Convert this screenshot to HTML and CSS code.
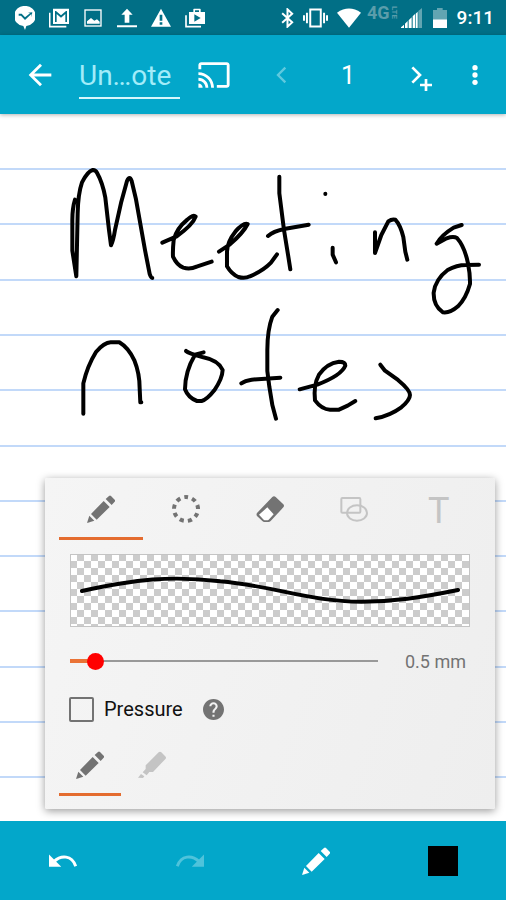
FILE: index.html
```
<!DOCTYPE html>
<html lang="en">
<head>
<meta charset="utf-8">
<meta name="viewport" content="width=device-width, initial-scale=1.0">
<title>Note</title>
<link rel="stylesheet" href="styles.css">
</head>
<body>
<svg class="defs" aria-hidden="true">
  <symbol id="pencil" viewBox="0 0 84 84">
    <path d="M0 84L7 62L22 77ZM12 57L50 18L68 36L29 74ZM56 12L66 3Q69 0 72 3L83 14Q86 17 83 20L74 30Z"/>
  </symbol>
  <symbol id="undo" viewBox="0 0 87 84">
    <path d="M0 22V60H38Z"/>
    <path d="M15 44C38 22 71 24 83 58" fill="none" stroke="currentColor" stroke-width="9"/>
  </symbol>
</svg>

<div class="status-bar">
  <div class="status-left">
    <svg viewBox="0 0 60 72"><path fill-rule="evenodd" d="M30 0A30 30 0 1 1 34 60L30 72L25 60A30 30 0 0 1 30 0ZM11 23V29H18L30 42L49 24V34L52 19L39 20L45 22L30 34L20 23Z"/></svg>
    <svg viewBox="0 0 60 60"><path d="M2 14V56H52" fill="none" stroke="currentColor" stroke-width="5"/><path fill-rule="evenodd" d="M12 2H60V48H12ZM18 9V42H23V18L36 29L49 18V42H54V9H51L36 22L21 9Z"/></svg>
    <svg viewBox="0 0 60 60"><rect class="outline" x="6" y="6" width="48" height="48" stroke-width="4"/><path d="M12 47V40L24 30L34 38L42 34L50 41V47Z"/></svg>
    <svg viewBox="0 0 60 60"><path d="M30 2L47 20H37V44H23V20H13ZM0 52H60V58H0Z"/></svg>
    <svg viewBox="0 0 60 60"><path fill-rule="evenodd" d="M30 2L60 56H0ZM26 20V38H34V20ZM26 43V50H34V43Z"/></svg>
    <svg viewBox="0 0 60 60"><path d="M3 22V56H48" fill="none" stroke="currentColor" stroke-width="5"/><path fill-rule="evenodd" d="M12 12H25V4Q25 2 27 2H45Q47 2 47 4V12H60V48H12ZM30 7V12H42V7ZM28 19V41L47 30Z"/></svg>
  </div>
  <div class="status-right">
    <svg class="bluetooth" viewBox="0 0 38 60"><path d="M3 16L33 43L19 56V4L33 17L3 44" fill="none" stroke="currentColor" stroke-width="6"/></svg>
    <svg class="vibrate" viewBox="0 0 76 60"><path d="M22 4H54V56H22ZM12 14V46M64 14V46M3 22V38M73 22V38" fill="none" stroke="currentColor" stroke-width="6"/></svg>
    <svg class="wifi" viewBox="0 0 74 60"><path d="M0 14Q37 -12 74 14L37 60Z"/></svg>
    <span class="network">4G<small>LTE</small></span>
    <svg class="signal" viewBox="0 0 63 60"><path d="M0 60V58L9 50V60ZM12 60V47L20 39V60ZM23 60V37L32 28V60ZM35 60V25L42 18V60ZM44 60V17L50 11V60Z"/><path class="dim" d="M52 60V9L63 0V60Z"/></svg>
    <svg class="battery" viewBox="0 0 42 60"><path class="dim" d="M0 6H12V0H29V6H42V34H0Z"/><path d="M0 34H42V60H0Z"/></svg>
    <span class="clock">9:11</span>
  </div>
</div>

<header class="toolbar">
  <button class="back" aria-label="Back"><svg viewBox="0 0 24 24"><path d="M20 11H7.83l5.59-5.59L12 4l-8 8 8 8 1.41-1.41L7.83 13H20v-2z"/></svg></button>
  <input class="title" type="text" value="Un…ote" aria-label="Note title">
  <button class="cast" aria-label="Cast"><svg viewBox="0 0 24 24"><path d="M21 3H3c-1.1 0-2 .9-2 2v3h2V5h18v14h-7v2h7c1.1 0 2-.9 2-2V5c0-1.1-.9-2-2-2zM1 18v3h3c0-1.66-1.34-3-3-3zm0-4v2c2.76 0 5 2.24 5 5h2c0-3.87-3.13-7-7-7zm0-4v2c4.97 0 9 4.03 9 9h2c0-6.08-4.93-11-11-11z"/></svg></button>
  <button class="prev" aria-label="Previous page" disabled><svg viewBox="0 0 102 102"><path d="M61 29L39 51L61 73" fill="none" stroke="currentColor" stroke-width="7"/></svg></button>
  <span class="page-number">1</span>
  <button class="next" aria-label="Add page"><svg viewBox="0 0 102 102"><path d="M28 28L51 51L28 74M69 63V99M51 81H87" fill="none" stroke="currentColor" stroke-width="8"/></svg></button>
  <button class="more" aria-label="More options"><svg viewBox="0 0 102 102"><circle cx="51" cy="26" r="9"/><circle cx="51" cy="51" r="9"/><circle cx="51" cy="76" r="9"/></svg></button>
</header>

<main class="canvas">
  <svg class="paper" role="img" aria-label="Meeting notes">
    <g class="rules">
      <line x2="100%" y1="55" y2="55"/>
      <line x2="100%" y1="110" y2="110"/>
      <line x2="100%" y1="166" y2="166"/>
      <line x2="100%" y1="221" y2="221"/>
      <line x2="100%" y1="276" y2="276"/>
      <line x2="100%" y1="332" y2="332"/>
      <line x2="100%" y1="387" y2="387"/>
      <line x2="100%" y1="442" y2="442"/>
      <line x2="100%" y1="497" y2="497"/>
      <line x2="100%" y1="553" y2="553"/>
      <line x2="100%" y1="608" y2="608"/>
      <line x2="100%" y1="663" y2="663"/>
    </g>
    <g class="ink">
      <!-- Mee -->
      <g transform="translate(50 36) scale(.3333)">
        <path d="M75 149Q67 175 67 210V302L79 379L83 190Q84 132 96 97Q113 64 128 60Q136 59 141 68Q158 98 166 143L177 240L183 286Q190 272 195 240L214 155L231 93Q239 75 245 93L258 148L285 300L299 372Q303 384 307 384"/>
        <path d="M337 278L380 259Q428 225 437 200Q430 192 412 209Q380 235 371 270Q368 300 369 320Q381 346 400 353Q420 359 440 350L485 335"/>
        <path d="M507 305L540 283Q580 248 593 222Q580 217 556 245Q532 275 531 305V349Q545 373 565 381Q584 387 600 379Q640 362 663 338L681 313"/>
      </g>
      <!-- ting -->
      <g transform="translate(260 46) scale(.3333)">
        <path d="M58 50V100L72 210L85 290L91 328M24 228Q40 214 72 207L146 194"/>
        <path d="M196 101V102M218 263V284L228 307"/>
        <path d="M345 217V279L364 225L385 184Q396 176 406 179Q421 195 430 231L436 275L442 299"/>
        <path d="M605 195L581 203Q545 225 530 251L560 235Q580 228 591 234Q614 260 624 310Q631 345 630 372Q618 415 594 439Q570 460 549 457Q520 438 521 398Q526 358 563 330Q590 315 618 315L657 314"/>
      </g>
      <!-- no -->
      <g transform="translate(60 186) scale(.3333)">
        <path d="M70 341V250Q82 198 108 156Q132 128 152 127H178Q205 143 223 181Q239 221 239 265L241 307L244 307"/>
        <path d="M378 153Q385 160 430 172Q475 181 488 210Q487 236 463 271Q440 300 425 303H411Q385 294 375 268Q375 215 405 164L431 157"/>
      </g>
      <!-- tes -->
      <g transform="translate(220 186) scale(.3333)">
        <path d="M173 30L157 50Q142 90 142 150V213L148 260L157 315L168 356M64 250Q75 242 95 239L181 233"/>
        <path d="M239 268L292 254Q365 226 376 197Q376 185 357 185Q320 190 297 224Q280 255 285 301Q305 328 330 329H357L383 317L406 303"/>
        <path d="M481 194L495 212L534 240Q570 270 570 285Q570 300 544 322Q510 347 467 355"/>
      </g>
    </g>
  </svg>

  <section class="panel">
    <div class="tabs">
      <button class="tab active" aria-label="Pen"><svg><use href="#pencil"/></svg></button>
      <button class="tab" aria-label="Select"><svg viewBox="0 0 84 84"><circle class="outline" cx="42" cy="42" r="36" stroke-width="12" pathLength="90" stroke-dasharray="5 5" stroke-dashoffset="2.5" transform="rotate(-90 42 42)"/></svg></button>
      <button class="tab" aria-label="Eraser"><svg viewBox="0 0 84 84"><path fill="#fff" d="M8 58L36 32L56 56L38 78H20Z"/><path fill-rule="evenodd" d="M3 54L49 6Q54 2 59 6L82 28Q86 32 82 37L44 78Q41 81 37 81H25Q22 81 19 78L3 63Q0 58 3 54ZM9 59L23 74Q25 76 28 76H33Q36 76 38 74L53 58L34 37Z"/></svg></button>
      <button class="tab" aria-label="Shapes" disabled><svg viewBox="0 0 84 84"><rect class="outline" x="4" y="9" width="57" height="44" rx="3" stroke-width="6"/><ellipse class="outline" cx="51" cy="54" rx="30" ry="23" stroke-width="6"/></svg></button>
      <button class="tab text-tool" disabled>T</button>
    </div>

    <svg class="preview" viewBox="0 0 400 73" preserveAspectRatio="none" role="img" aria-label="Stroke preview">
      <path d="M11 37C65 25 100 21 150 27C205 32 240 48 292 48C325 48 350 44 389 36"/>
    </svg>

    <div class="size-row">
      <input class="size-slider" type="range" min="0" max="100" value="6" aria-label="Stroke width">
      <output class="size-value">0.5 mm</output>
    </div>

    <div class="pressure-row">
      <input type="checkbox" id="pressure">
      <label for="pressure">Pressure</label>
      <button class="help" aria-label="Help"><svg viewBox="2 2 20 20"><path d="M12 2C6.48 2 2 6.48 2 12s4.48 10 10 10 10-4.48 10-10S17.52 2 12 2zm1 17h-2v-2h2v2zm2.07-7.75l-.9.92C13.45 12.9 13 13.5 13 15h-2v-.5c0-1.1.45-2.1 1.17-2.83l1.24-1.26c.37-.36.59-.86.59-1.41 0-1.1-.9-2-2-2s-2 .9-2 2H8c0-2.21 1.79-4 4-4s4 1.79 4 4c0 .88-.36 1.68-.93 2.25z"/></svg></button>
    </div>

    <div class="tabs pen-types">
      <button class="tab active" aria-label="Pencil"><svg><use href="#pencil"/></svg></button>
      <button class="tab" aria-label="Highlighter" disabled><svg viewBox="0 0 84 84"><path d="M0 80L9 69L19 76L15 81ZM14 64L23 54V43L62 4Q66 0 70 4L83 17Q85 20 83 23L45 63H34L26 73Z"/></svg></button>
    </div>
  </section>
</main>

<footer class="bottom-bar">
  <button aria-label="Undo"><svg><use href="#undo"/></svg></button>
  <button aria-label="Redo" disabled><svg class="flip"><use href="#undo"/></svg></button>
  <button aria-label="Pen"><svg><use href="#pencil"/></svg></button>
  <button aria-label="Colour"><span class="swatch"></span></button>
</footer>
</body>
</html>
```
FILE: styles.css
```
* {
  margin: 0;
  padding: 0;
  box-sizing: border-box;
}
body {
  font-family: Roboto, sans-serif;
  background: #fff;
  min-height: 100vh;
  display: flex;
  flex-direction: column;
}
svg {
  display: block;
  fill: currentColor;
}
.outline {
  fill: none;
  stroke: currentColor;
}
button {
  display: flex;
  align-items: center;
  justify-content: center;
  background: none;
  border: none;
  color: inherit;
  font-family: inherit;
  cursor: pointer;
}
.defs {
  position: absolute;
  width: 0;
  height: 0;
}

/* status bar */
.status-bar {
  display: flex;
  justify-content: space-between;
  align-items: center;
  height: 35px;
  padding: 0 12px 0 15px;
  background: #016f86;
  color: #fff;
}
.status-left {
  display: flex;
  align-items: center;
  gap: 14px;
}
.status-left svg {
  width: 20px;
  height: 20px;
}
.status-left svg:first-child {
  height: 24px;
}
.status-right {
  display: flex;
  align-items: center;
}
.status-right svg {
  height: 20px;
  margin-right: 9px;
}
.status-right .bluetooth { width: 13px; }
.status-right .vibrate { width: 25px; }
.status-right .wifi { width: 24px; margin-right: 6px; }
.status-right .signal { width: 21px; margin-right: 11px; }
.status-right .battery { width: 14px; margin-right: 10px; }
.dim { fill: #62a5b2; }
.network {
  display: flex;
  align-items: center;
  height: 16px;
  margin: 0 2px 10px 0;
  color: #5b9dab;
  font-size: 18px;
  font-weight: bold;
}
.network small {
  font-size: 8px;
  line-height: 9px;
  writing-mode: vertical-rl;
}
.clock {
  font-size: 19px;
  font-weight: 500;
}

/* toolbar */
.toolbar {
  display: flex;
  align-items: center;
  height: 79px;
  padding-right: 16px;
  background: #03a7ca;
  color: #fff;
  box-shadow: 0 1px 4px rgba(0,0,0,0.3);
  position: relative;
  z-index: 1;
}
.toolbar button {
  height: 79px;
}
.toolbar svg {
  width: 34px;
  height: 34px;
}
.back { width: 79px; }
.cast { width: 68px; }
.prev { width: 68px; }
.next { width: 80px; }
.more { width: 30px; }
.prev { color: #5fc9de; }
.title {
  flex: 1;
  min-width: 0;
  height: 48px;
  padding-top: 4px;
  border: none;
  border-bottom: 2px solid #d5f6fc;
  background: none;
  color: #a2ecf9;
  font-family: inherit;
  font-size: 28px;
  outline: none;
}
.page-number {
  width: 64px;
  padding-top: 2px;
  text-align: center;
  font-size: 25px;
}

/* note page */
.canvas {
  flex: 1;
  display: flex;
  flex-direction: column;
  justify-content: flex-end;
  position: relative;
  padding: 0 11px 12px 45px;
}
.paper {
  position: absolute;
  top: 0;
  left: 0;
  width: 100%;
  height: 100%;
}
.rules {
  stroke: #c2d9f9;
  stroke-width: 2;
}
.ink {
  fill: none;
  stroke: #000;
  stroke-width: 12;
  stroke-linecap: round;
  stroke-linejoin: round;
}

/* pen settings */
.panel {
  position: relative;
  padding: 0 14px 13px;
  background: linear-gradient(110deg, #f5f5f5, #eee);
  border-radius: 2px;
  box-shadow: 0 2px 8px rgba(0,0,0,0.4);
  color: #737373;
}
.tabs {
  display: flex;
}
.tab {
  flex: 1;
  height: 62px;
  padding-top: 2px;
  border-bottom: 3px solid transparent;
}
.tab.active {
  border-bottom-color: #e46c2f;
}
.tab svg {
  width: 28px;
  height: 28px;
}
.tab:disabled {
  color: #c4c4c4;
}
.text-tool {
  padding-top: 6px;
  font-size: 36px;
}
.preview {
  width: calc(100% - 22px);
  height: 73px;
  margin: 14px 11px 0;
  border: 1px solid #c4c4c4;
  background: conic-gradient(#ccc 25%, #fff 0 50%, #ccc 0 75%, #fff 0) 0 0 / 14px 14px border-box;
}
.preview path {
  fill: none;
  stroke: #000;
  stroke-width: 4;
  stroke-linecap: round;
}
.size-row {
  display: flex;
  align-items: center;
  height: 68px;
  padding: 0 15px 0 11px;
}
.size-slider {
  flex: 1;
  min-width: 0;
  height: 18px;
  margin-right: 27px;
  appearance: none;
  background:
    linear-gradient(#ea7336, #ea7336) 0 50% / 20px 4px no-repeat,
    linear-gradient(#999, #999) 0 50% / 100% 2px no-repeat;
}
.size-slider::-webkit-slider-thumb {
  appearance: none;
  width: 17px;
  height: 17px;
  border-radius: 50%;
  background: #f00;
}
.size-value {
  font-size: 18px;
}
.pressure-row {
  display: flex;
  align-items: center;
  height: 28px;
  padding-left: 10px;
}
.pressure-row input {
  appearance: none;
  width: 25px;
  height: 25px;
  margin-right: 10px;
  border: 2px solid #737373;
  border-radius: 2px;
}
.pressure-row input:checked {
  background: #e46c2f;
}
.pressure-row label {
  color: #111;
  font-size: 20px;
}
.help {
  margin-left: 20px;
}
.help svg {
  width: 21px;
  height: 21px;
}
.pen-types {
  margin-top: 11px;
}
.pen-types .tab {
  flex: none;
  width: 62px;
}

/* bottom bar */
.bottom-bar {
  display: flex;
  height: 79px;
  background: #03a7ca;
  color: #fff;
  position: relative;
}
.bottom-bar button {
  flex: 1;
}
.bottom-bar button:disabled {
  color: #4fc3db;
}
.bottom-bar svg {
  width: 28px;
  height: 28px;
}
.flip {
  transform: scaleX(-1);
}
.swatch {
  width: 30px;
  height: 30px;
  background: #000;
}
```
